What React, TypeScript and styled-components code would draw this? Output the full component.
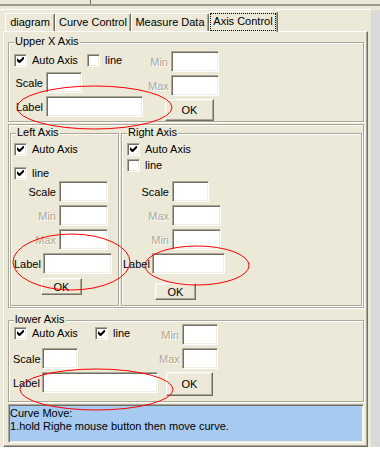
import React from "react";
import styled, { createGlobalStyle } from "styled-components";

const face = "#ECE9D8";
const shadow = "#ACA899";
const dark = "#716F64";
const light = "#F1EFE2";

const GlobalStyle = createGlobalStyle`
  html, body {
    margin: 0;
    padding: 0;
    background: #ffffff;
  }
  body {
    font-family: "Liberation Sans", Arial, sans-serif;
    font-size: 11px;
    color: #000;
  }
  * {
    box-sizing: border-box;
  }
`;

const Window = styled.div`
  position: relative;
  width: 380px;
  height: 447px;
  background: ${face};
  overflow: hidden;
`;

const TopBar = styled.div`
  height: 6px;
  border-bottom: 2px solid #9d9a8c;
`;

const TopCell = styled.div`
  width: 91px;
  height: 4px;
  border-right: 1px solid ${dark};
`;

const Main = styled.div`
  display: flex;
  margin-top: 3px;
`;

const LeftPane = styled.div`
  width: 371px;
  border-top: 1px solid #fff;
  padding-left: 3px;
`;

const Splitter = styled.div`
  width: 9px;
  height: 437px;
  margin-top: 1px;
  background: #dadada;
`;

const TabStrip = styled.div`
  display: flex;
  align-items: flex-end;
  height: 21px;
  padding-left: 2px;
`;

const Tab = styled.div<{ $w: number; $active?: boolean }>`
  position: relative;
  width: ${(p) => p.$w}px;
  height: ${(p) => (p.$active ? 21 : 18)}px;
  margin-bottom: ${(p) => (p.$active ? -1 : 0)}px;
  z-index: ${(p) => (p.$active ? 1 : 0)};
  background: ${face};
  border-top: 1px solid #fff;
  border-left: 1px solid #fff;
  border-right: 1px solid ${dark};
  border-top-left-radius: 2px;
  border-top-right-radius: 2px;
  box-shadow: inset -1px 0 0 ${shadow};
  text-align: center;
  line-height: 16px;
  white-space: nowrap;
`;

const FocusRect = styled.span`
  display: block;
  width: 66px;
  height: 18px;
  margin-top: 1px;
  border: 1px dotted #000;
  line-height: 15px;
`;

const Panel = styled.div`
  width: 365px;
  height: 416px;
  border-top: 1px solid #fff;
  border-left: 1px solid #fff;
  border-right: 1px solid ${dark};
  border-bottom: 1px solid ${dark};
  box-shadow: inset -1px -1px 0 ${shadow};
  padding: 10px 3px 2px 4px;
`;

const Group = styled.div<{ $h: number; $w?: number; $mt?: number }>`
  width: ${(p) => (p.$w ? `${p.$w}px` : "auto")};
  height: ${(p) => p.$h}px;
  margin-top: ${(p) => p.$mt ?? 0}px;
  border: 1px solid ${shadow};
  box-shadow: inset 1px 1px 0 #fff, 1px 1px 0 #fff;
`;

const Caption = styled.div`
  width: fit-content;
  height: 13px;
  margin: -8px 0 0 5px;
  padding: 0 1px;
  background: ${face};
  line-height: 13px;
`;

const AxisPair = styled.div`
  display: flex;
  gap: 2px;
  padding: 8px 0 0 1px;
`;

const Body = styled.div<{ $pl: number }>`
  display: flex;
  padding-left: ${(p) => p.$pl}px;
`;

const Col = styled.div<{ $w?: number; $pt?: number }>`
  display: flex;
  flex-direction: column;
  align-items: flex-start;
  width: ${(p) => (p.$w ? `${p.$w}px` : "auto")};
  padding-top: ${(p) => p.$pt ?? 0}px;
`;

const Stack = styled.div<{ $pl: number }>`
  display: flex;
  flex-direction: column;
  align-items: flex-start;
  padding-left: ${(p) => p.$pl}px;
`;

const CheckRow = styled.div<{ $mt?: number }>`
  display: flex;
  align-items: center;
  height: 13px;
  margin-top: ${(p) => p.$mt ?? 0}px;
`;

const CheckLabel = styled.div<{ $w?: number }>`
  display: flex;
  align-items: center;
  gap: 5px;
  width: ${(p) => (p.$w ? `${p.$w}px` : "auto")};
  line-height: 13px;
`;

const Box = styled.span`
  display: block;
  width: 13px;
  height: 13px;
  background: #fff;
  border-top: 1px solid ${shadow};
  border-left: 1px solid ${shadow};
  border-right: 1px solid #fff;
  border-bottom: 1px solid #fff;
  box-shadow: inset 1px 1px 0 ${dark}, inset -1px -1px 0 ${light};

  svg {
    display: block;
  }
`;

const Row = styled.div<{ $mt?: number; $ml?: number }>`
  display: flex;
  align-items: center;
  gap: 3px;
  height: 21px;
  margin-top: ${(p) => p.$mt ?? 0}px;
  margin-left: ${(p) => p.$ml ?? 0}px;
`;

const Label = styled.span<{ $w: number; $off?: boolean }>`
  width: ${(p) => p.$w}px;
  text-align: right;
  white-space: nowrap;
  color: ${(p) => (p.$off ? shadow : "#000")};
  text-shadow: ${(p) => (p.$off ? "1px 1px 0 #fff" : "none")};
`;

const Edit = styled.div<{ $w: number }>`
  width: ${(p) => p.$w}px;
  height: 21px;
  background: #fff;
  border-top: 1px solid ${shadow};
  border-left: 1px solid ${shadow};
  border-right: 1px solid #fff;
  border-bottom: 1px solid #fff;
  box-shadow: inset 1px 1px 0 ${dark}, inset -1px -1px 0 ${light};
`;

const Button = styled.button<{ $w: number; $h: number; $mt?: number; $ml?: number }>`
  width: ${(p) => p.$w}px;
  height: ${(p) => p.$h}px;
  margin: ${(p) => p.$mt ?? 0}px 0 0 ${(p) => p.$ml ?? 0}px;
  padding: 0;
  background: ${face};
  border: 1px solid;
  border-color: #fff ${dark} ${dark} #fff;
  box-shadow: inset -1px -1px 0 ${shadow}, inset 1px 1px 0 ${light};
  font-family: "Liberation Sans", Arial, sans-serif;
  font-size: 11px;
  color: #000;
`;

const InfoBox = styled.div`
  height: 39px;
  margin-top: 2px;
  padding: 2px 0 0 1px;
  background: #a6caf0;
  border: 1px solid;
  border-color: ${shadow} #fff #fff ${shadow};
  box-shadow: inset 1px 1px 0 ${dark}, inset -1px -1px 0 ${light};
  line-height: 13px;
`;

const Marks = styled.svg`
  position: absolute;
  left: 0;
  top: 0;
  pointer-events: none;
`;

const Check = ({ label, checked, w }: { label: string; checked?: boolean; w?: number }) => (
  <CheckLabel $w={w}>
    <Box>
      {checked && (
        <svg width="11" height="11" viewBox="0 0 11 11">
          <path d="M2 4v2l2 2h1l4-4v-2h-1l-3 3h-1l-2-2z" fill="#000" />
        </svg>
      )}
    </Box>
    <span>{label}</span>
  </CheckLabel>
);

const Field = ({
  label,
  lw,
  ew,
  off,
  mt,
  ml,
}: {
  label: string;
  lw: number;
  ew: number;
  off?: boolean;
  mt?: number;
  ml?: number;
}) => (
  <Row $mt={mt} $ml={ml}>
    <Label $w={lw} $off={off}>
      {label}
    </Label>
    <Edit $w={ew} />
  </Row>
);

const ellipses = [
  { cx: 94.5, cy: 107.5, rx: 77.5, ry: 21.5 },
  { cx: 71.5, cy: 262, rx: 58.5, ry: 28 },
  { cx: 197, cy: 265.5, rx: 52, ry: 19.5 },
  { cx: 96.5, cy: 389.5, rx: 76.5, ry: 20.5 },
];

export default function App() {
  return (
    <>
      <GlobalStyle />
      <Window>
        <TopBar>
          <TopCell />
        </TopBar>
        <Main>
          <LeftPane>
            <TabStrip>
              <Tab $w={50}>diagram</Tab>
              <Tab $w={76}>Curve Control</Tab>
              <Tab $w={78}>Measure Data</Tab>
              <Tab $w={69} $active>
                <FocusRect>Axis Control</FocusRect>
              </Tab>
            </TabStrip>
            <Panel>
              <Group $h={80}>
                <Caption>Upper X Axis</Caption>
                <Body $pl={5}>
                  <Col $w={134} $pt={6}>
                    <CheckRow>
                      <Check label="Auto Axis" checked w={73} />
                      <Check label="line" />
                    </CheckRow>
                    <Field label="Scale" lw={29} ew={36} mt={5} />
                    <Field label="Label" lw={29} ew={97} mt={3} />
                  </Col>
                  <Col $pt={3}>
                    <Field label="Min" lw={20} ew={48} off />
                    <Field label="Max" lw={20} ew={48} off mt={3} />
                    <Button $w={49} $h={22} $mt={3} $ml={17}>
                      OK
                    </Button>
                  </Col>
                </Body>
              </Group>

              <Group $h={184} $mt={2}>
                <AxisPair>
                  <Group $h={173} $w={109}>
                    <Caption>Left Axis</Caption>
                    <Stack $pl={3}>
                      <CheckRow $mt={4}>
                        <Check label="Auto Axis" checked />
                      </CheckRow>
                      <CheckRow $mt={11}>
                        <Check label="line" checked />
                      </CheckRow>
                      <Field label="Scale" lw={42} ew={49} mt={1} />
                      <Field label="Min" lw={42} ew={49} off mt={3} />
                      <Field label="Max" lw={42} ew={49} off mt={3} />
                      <Field label="Label" lw={26} ew={69} mt={3} />
                      <Button $w={41} $h={17} $mt={4} $ml={27}>
                        OK
                      </Button>
                    </Stack>
                  </Group>
                  <Group $h={173} $w={241}>
                    <Caption>Right Axis</Caption>
                    <Stack $pl={5}>
                      <CheckRow $mt={4}>
                        <Check label="Auto Axis" checked />
                      </CheckRow>
                      <CheckRow $mt={3}>
                        <Check label="line" />
                      </CheckRow>
                      <Field label="Scale" lw={42} ew={37} mt={9} />
                      <Field label="Max" lw={42} ew={49} off mt={3} />
                      <Field label="Min" lw={42} ew={49} off mt={3} />
                      <Field label="Label" lw={26} ew={73} mt={3} ml={-4} />
                      <Button $w={41} $h={17} $mt={9} $ml={28}>
                        OK
                      </Button>
                    </Stack>
                  </Group>
                </AxisPair>
              </Group>

              <Group $h={82} $mt={12}>
                <Caption>lower Axis</Caption>
                <Body $pl={5}>
                  <Col $w={145} $pt={1}>
                    <CheckRow>
                      <Check label="Auto Axis" checked w={81} />
                      <Check label="line" checked />
                    </CheckRow>
                    <Field label="Scale" lw={26} ew={36} mt={8} ml={-1} />
                    <Field label="Label" lw={26} ew={116} mt={3} ml={-1} />
                  </Col>
                  <Col style={{ marginTop: -2 }}>
                    <Field label="Min" lw={20} ew={36} off />
                    <Field label="Max" lw={20} ew={36} off mt={3} />
                    <Button $w={47} $h={24} $mt={3} $ml={7}>
                      OK
                    </Button>
                  </Col>
                </Body>
              </Group>

              <InfoBox>
                Curve Move:
                <br />
                1.hold Righe mouse button then move curve.
              </InfoBox>
            </Panel>
          </LeftPane>
          <Splitter />
        </Main>
        <Marks width="380" height="450">
          {ellipses.map((e, i) => (
            <ellipse key={i} {...e} fill="none" stroke="#ff0000" strokeWidth="1" />
          ))}
        </Marks>
      </Window>
    </>
  );
}
